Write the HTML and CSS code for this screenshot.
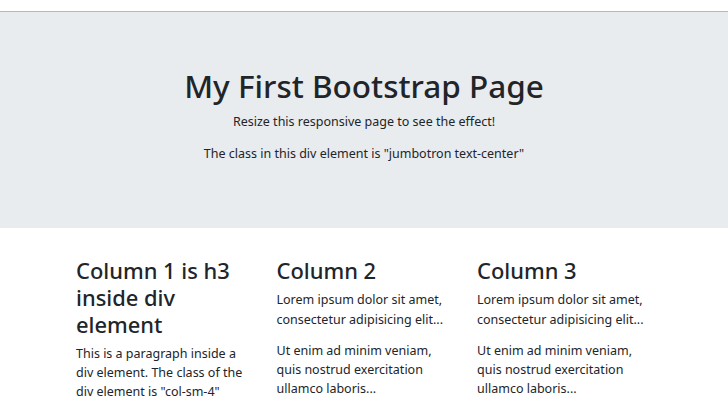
FILE: index.html
```
<!DOCTYPE html>
<html>
<head>
<meta charset="utf-8">
<link rel="stylesheet" href="styles.css">
</head>
<body>
<div class="topbar"></div>
<div class="jumbotron">
  <h1>My First Bootstrap Page</h1>
  <p>Resize this responsive page to see the effect!</p>
  <p>The class in this div element is "jumbotron text-center"</p>
</div>
<div class="container">
  <div class="col">
    <h3>Column 1 is h3 inside div element</h3>
    <p>This is a paragraph inside a div element. The class of the div element is "col-sm-4"</p>
  </div>
  <div class="col">
    <h3>Column 2</h3>
    <p>Lorem ipsum dolor sit amet, consectetur adipisicing elit...</p>
    <p>Ut enim ad minim veniam, quis nostrud exercitation ullamco laboris...</p>
  </div>
  <div class="col">
    <h3>Column 3</h3>
    <p>Lorem ipsum dolor sit amet, consectetur adipisicing elit...</p>
    <p>Ut enim ad minim veniam, quis nostrud exercitation ullamco laboris...</p>
  </div>
</div>
</body>
</html>
```
FILE: styles.css
```
html, body {
  margin: 0;
  padding: 0;
}
body {
  font-family: "Noto Sans", "Open Sans", sans-serif;
  font-size: 12.5px;
  line-height: 19.3px;
  color: #212529;
  background: #fff;
  overflow: hidden;
}
.topbar {
  height: 11px;
  border-bottom: 1px solid #b9b9b9;
}
.jumbotron {
  background: #e9ecef;
  height: 216px;
  box-sizing: border-box;
  padding-top: 55px;
  text-align: center;
}
.jumbotron h1 {
  margin: 0 0 7px;
  font-size: 31.5px;
  font-weight: 500;
  line-height: 38.4px;
}
.jumbotron p {
  margin: 0 0 12px;
}
.container {
  display: grid;
  grid-template-columns: repeat(3, 200.5px);
  padding: 30px 0 0 64px;
}
.col {
  padding: 0 12px;
}
.col h3 {
  margin: 0 0 5.5px;
  font-size: 21.9px;
  font-weight: 500;
  line-height: 26.8px;
}
.col p {
  margin: 0 0 12px;
}
```
